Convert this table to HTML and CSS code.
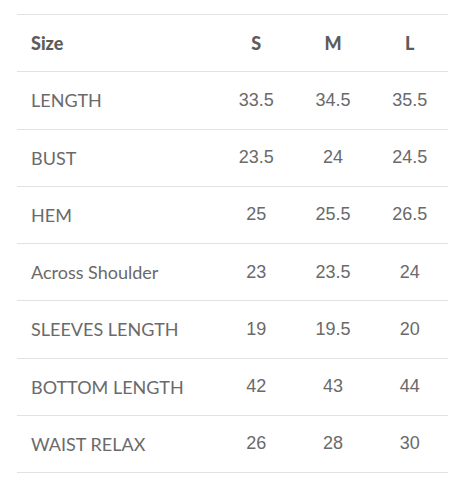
FILE: index.html
```html
<!DOCTYPE html>
<html>
<head>
<meta charset="utf-8">
<link rel="stylesheet" href="styles.css">
</head>
<body>
<table class="size-table">
  <thead>
    <tr><th class="label">Size</th><th>S</th><th>M</th><th>L</th></tr>
  </thead>
  <tbody>
    <tr><td class="label">LENGTH</td><td>33.5</td><td>34.5</td><td>35.5</td></tr>
    <tr><td class="label">BUST</td><td>23.5</td><td>24</td><td>24.5</td></tr>
    <tr><td class="label">HEM</td><td>25</td><td>25.5</td><td>26.5</td></tr>
    <tr><td class="label">Across Shoulder</td><td>23</td><td>23.5</td><td>24</td></tr>
    <tr><td class="label">SLEEVES LENGTH</td><td>19</td><td>19.5</td><td>20</td></tr>
    <tr><td class="label">BOTTOM LENGTH</td><td>42</td><td>43</td><td>44</td></tr>
    <tr><td class="label">WAIST RELAX</td><td>26</td><td>28</td><td>30</td></tr>
  </tbody>
</table>
</body>
</html>
```
FILE: styles.css
```css
html, body { margin: 0; padding: 0; background: #fff; }
body { padding: 14px 22px 0 17px; }
.size-table {
  width: 431px;
  border-collapse: collapse;
  table-layout: fixed;
  color: #6a6a6a;
}
.size-table th, .size-table td {
  height: 56.25px;
  padding: 0;
  border-top: 1px solid #e2e2e2;
  border-bottom: 1px solid #e2e2e2;
  text-align: center;
  vertical-align: middle;
  font-family: "Liberation Sans", Arial, sans-serif;
  font-size: 18px;
  font-weight: normal;
}
.size-table th:not(.label), .size-table td:not(.label) { width: 76.67px; }
.size-table .label {
  width: 201px;
  text-align: left;
  padding-left: 14px;
  box-sizing: border-box;
  font-family: Lato, sans-serif;
  font-size: 18px;
}
.size-table th {
  font-family: Lato, sans-serif;
  font-weight: 900;
  font-size: 18px;
  color: #5c5c5c;
}
```
